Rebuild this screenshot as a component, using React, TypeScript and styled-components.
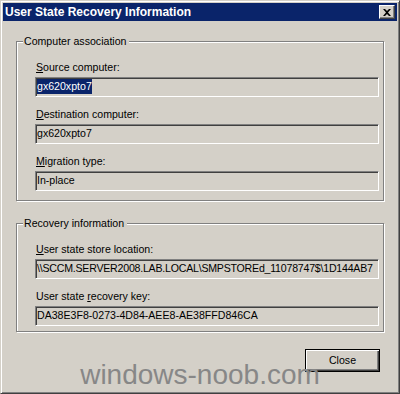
import React from "react";
import styled, { createGlobalStyle } from "styled-components";

const GlobalStyle = createGlobalStyle`
  html, body {
    margin: 0;
    padding: 0;
    background: #d4d0c8;
  }
  body {
    font-family: "Liberation Sans", Arial, sans-serif;
  }
`;

const Window = styled.div`
  position: relative;
  box-sizing: border-box;
  width: 400px;
  height: 394px;
  padding: 2px;
  background: #d4d0c8;
  border: 1px solid;
  border-color: #d4d0c8 #404040 #404040 #d4d0c8;
  box-shadow: inset 1px 1px 0 #fff, inset -1px -1px 0 #808080;
  display: flex;
  flex-direction: column;
  overflow: hidden;
`;

const TitleBar = styled.div`
  height: 18px;
  flex: none;
  background: #0a246a;
  display: flex;
  align-items: center;
  padding: 0 2px;
`;

const Title = styled.div`
  flex: 1;
  color: #fff;
  font-weight: bold;
  font-size: 12px;
  line-height: 18px;
  white-space: nowrap;
`;

const CaptionButton = styled.div`
  box-sizing: border-box;
  width: 16px;
  height: 14px;
  background: #d4d0c8;
  border: 1px solid;
  border-color: #fff #404040 #404040 #fff;
  box-shadow: inset -1px -1px 0 #808080;
  display: flex;
  align-items: center;
  justify-content: center;
`;

const Body = styled.div`
  flex: 1;
  padding: 14px 13px 0;
  display: flex;
  flex-direction: column;
`;

const Group = styled.fieldset<{ $bottom: number }>`
  margin: 0;
  min-width: 0;
  padding: 13px 4px ${(p) => p.$bottom}px 18px;
  border: 1px solid #808080;
  box-shadow: 1px 1px 0 #fff, inset 1px 1px 0 #fff;
  display: flex;
  flex-direction: column;
  gap: 11px;
  & + & {
    margin-top: 16px;
  }
`;

const Legend = styled.legend`
  margin-left: -12px;
  padding: 0 3px 0 1px;
  background: #d4d0c8;
  color: #000;
  font-size: 10.6px;
  line-height: 13px;
`;

const Field = styled.div`
  display: flex;
  flex-direction: column;
`;

const Label = styled.div`
  font-size: 10.6px;
  line-height: 13px;
  color: #000;
  margin-bottom: 3px;
  padding-left: 1px;
`;

const ReadOnlyBox = styled.div<{ $tight?: boolean }>`
  box-sizing: border-box;
  height: 20px;
  padding: 0 1px;
  border: 1px solid;
  border-color: #808080 #fff #fff #808080;
  box-shadow: inset 1px 1px 0 #404040, inset -1px -1px 0 #d4d0c8;
  background: #d4d0c8;
  font-size: 10.6px;
  line-height: 17px;
  letter-spacing: ${(p) => (p.$tight ? "-0.22px" : "normal")};
  color: #000;
  white-space: nowrap;
  overflow: hidden;
`;

const Selected = styled.span`
  background: #0a246a;
  color: #fff;
  padding: 1px 0 2px;
`;

const Footer = styled.div`
  display: flex;
  justify-content: flex-end;
  margin-top: 17px;
  padding-right: 4px;
`;

const PushButton = styled.div`
  box-sizing: border-box;
  width: 75px;
  height: 23px;
  border: 1px solid #000;
  box-shadow: inset 1px 1px 0 #fff, inset -1px -1px 0 #404040,
    inset -2px -2px 0 #808080;
  background: #d4d0c8;
  font-size: 10.6px;
  line-height: 21px;
  text-align: center;
  color: #000;
`;

const Watermark = styled.div`
  position: absolute;
  left: 0;
  right: 0;
  top: 360px;
  text-align: center;
  font-family: "Liberation Sans", Arial, sans-serif;
  font-size: 28px;
  line-height: 28px;
  color: #878787;
  pointer-events: none;
`;

function CloseGlyph() {
  return (
    <svg width="8" height="7" viewBox="0 0 8 7">
      <path
        d="M0 0h2l2 2 2-2h2L5 3.5 8 7H6L4 5 2 7H0l3-3.5z"
        fill="#000"
      />
    </svg>
  );
}

export default function App() {
  return (
    <>
      <GlobalStyle />
      <Window>
        <TitleBar>
          <Title>User State Recovery Information</Title>
          <CaptionButton>
            <CloseGlyph />
          </CaptionButton>
        </TitleBar>
        <Body>
          <Group $bottom={9}>
            <Legend>Computer association</Legend>
            <Field>
              <Label>
                <u>S</u>ource computer:
              </Label>
              <ReadOnlyBox>
                <Selected>gx620xpto7</Selected>
              </ReadOnlyBox>
            </Field>
            <Field>
              <Label>
                <u>D</u>estination computer:
              </Label>
              <ReadOnlyBox>gx620xpto7</ReadOnlyBox>
            </Field>
            <Field>
              <Label>
                <u>M</u>igration type:
              </Label>
              <ReadOnlyBox>In-place</ReadOnlyBox>
            </Field>
          </Group>
          <Group $bottom={5}>
            <Legend>Recovery information</Legend>
            <Field>
              <Label>
                <u>U</u>ser state store location:
              </Label>
              <ReadOnlyBox $tight>
                \\SCCM.SERVER2008.LAB.LOCAL\SMPSTOREd_11078747$\1D144AB7
              </ReadOnlyBox>
            </Field>
            <Field>
              <Label>
                User state <u>r</u>ecovery key:
              </Label>
              <ReadOnlyBox>DA38E3F8-0273-4D84-AEE8-AE38FFD846CA</ReadOnlyBox>
            </Field>
          </Group>
          <Footer>
            <PushButton>Close</PushButton>
          </Footer>
        </Body>
        <Watermark>windows-noob.com</Watermark>
      </Window>
    </>
  );
}
